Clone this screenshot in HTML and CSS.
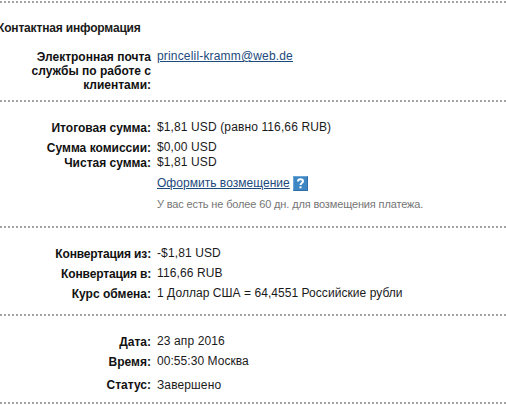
FILE: index.html
```
<!DOCTYPE html>
<html lang="ru">
<head>
<meta charset="utf-8">
<title>Сведения о платеже</title>
<link rel="stylesheet" href="styles.css">
</head>
<body>
<main>
<section class="contact">
  <h2>Контактная информация</h2>
  <dl><div class="row"><dt>Электронная почта службы по работе с клиентами:</dt><dd><a class="mail" href="#">princelil-kramm@web.de</a></dd></div></dl>
</section>
<section class="amounts">
  <dl>
    <div class="row"><dt>Итоговая сумма:</dt><dd>$1,81 USD (равно 116,66 RUB)</dd></div>
    <div class="row fee"><dt>Сумма комиссии:</dt><dd>$0,00 USD</dd></div>
    <div class="row"><dt>Чистая сумма:</dt><dd>$1,81 USD</dd></div>
  </dl>
  <div class="refund">
    <a class="refund-link" href="#">Оформить возмещение</a>
    <svg class="help" width="15" height="15" viewBox="0 0 15 15"><rect width="15" height="15" fill="#3f86c4"/><path d="M.5 14V.5H14" fill="none" stroke="#6aa5d6"/><path d="M1 14.5h13.5V1" fill="none" stroke="#2f6da8"/><path d="M5 5.4C5 2.6 10 2.7 10 5.3 10 7 7.5 7 7.5 9.1" fill="none" stroke="#fff" stroke-width="2"/><rect x="6.5" y="10.3" width="2" height="2" fill="#fff"/></svg>
  </div>
  <p class="note">У вас есть не более 60 дн. для возмещения платежа.</p>
</section>
<section class="exchange">
  <dl>
    <div class="row"><dt class="tight">Конвертация из:</dt><dd>-$1,81 USD</dd></div>
    <div class="row"><dt class="tight">Конвертация в:</dt><dd>116,66 RUB</dd></div>
    <div class="row"><dt>Курс обмена:</dt><dd class="rate">1 Доллар США = 64,4551 Российские рубли</dd></div>
  </dl>
</section>
<section class="status">
  <dl>
    <div class="row"><dt>Дата:</dt><dd>23 апр 2016</dd></div>
    <div class="row"><dt>Время:</dt><dd class="time">00:55:30 Москва</dd></div>
    <div class="row state"><dt>Статус:</dt><dd>Завершено</dd></div>
  </dl>
</section>
</main>
</body>
</html>
```
FILE: styles.css
```
* { box-sizing: border-box; }
body {
  margin: 0;
  background: #fff;
  color: #1a1a1a;
  font: 12px/14px "Liberation Sans", Arial, sans-serif;
  overflow: hidden;
}
main { padding-top: 1px; }
h2, dl, dd, p { margin: 0; }
section { padding-top: 20px; }
section, .status::after {
  background: repeating-linear-gradient(90deg, #a3a3a3 0 2px, #fff 2px 4px) top / 100% 2px no-repeat;
}
.contact { height: 99px; }
.amounts { height: 126px; }
.exchange { height: 88px; }
.status { height: 90px; display: flex; flex-direction: column; justify-content: space-between; }
.status::after { content: ""; height: 2px; }
h2 { margin: 0 0 14px -3px; font-size: 12px; letter-spacing: -0.17px; }
.row { display: grid; grid-template-columns: 151px 1fr; column-gap: 6px; white-space: nowrap; }
dt { padding: 1px 0 0 27px; color: #111; font-weight: bold; text-align: right; white-space: normal; }
dt.tight { letter-spacing: -0.15px; }
dd { letter-spacing: 0.12px; }
.mail { letter-spacing: 0.17px; }
.rate, .time { letter-spacing: 0.05px; }
.fee { margin-top: 5px; }
.exchange dl, .status dl { display: grid; row-gap: 5px; }
.state { margin-top: 4px; }
.state dt { padding-top: 0; }
a { color: #1c4a7c; text-decoration: underline; }
.refund { display: flex; gap: 3px; height: 15px; margin: 6px 0 7px 157px; }
.refund-link { letter-spacing: 0.03px; }
.help { display: block; }
.note { margin-left: 157px; color: #757575; font-size: 11px; line-height: 13px; letter-spacing: -0.14px; white-space: nowrap; }
```
